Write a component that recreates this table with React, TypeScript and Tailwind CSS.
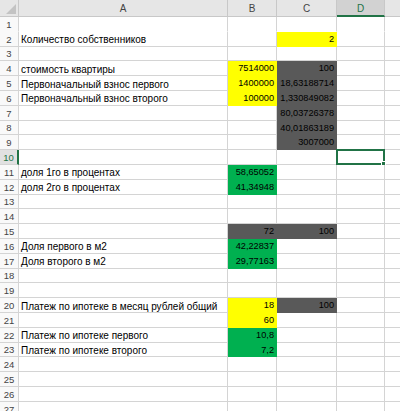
type Cell = { v: string; bg?: string };
type Row = { a?: string; b?: Cell; c?: Cell };

const Y = "bg-[#ffff00] border-[#ffff00]";
const G = "bg-[#00b050] border-[#00b050]";
const K = "bg-[#595959] border-[#595959]";

const rows: Row[] = [
  {},
  { a: "Количество собственников", c: { v: "2", bg: Y } },
  {},
  { a: "стоимость квартиры", b: { v: "7514000", bg: Y }, c: { v: "100", bg: K } },
  { a: "Первоначальный взнос первого", b: { v: "1400000", bg: Y }, c: { v: "18,63188714", bg: K } },
  { a: "Первоначальный взнос второго", b: { v: "100000", bg: Y }, c: { v: "1,330849082", bg: K } },
  { c: { v: "80,03726378", bg: K } },
  { c: { v: "40,01863189", bg: K } },
  { c: { v: "3007000", bg: K } },
  {},
  { a: "доля 1го в процентах", b: { v: "58,65052", bg: G } },
  { a: "доля 2го в процентах", b: { v: "41,34948", bg: G } },
  {},
  {},
  { b: { v: "72", bg: K }, c: { v: "100", bg: K } },
  { a: "Доля первого в м2", b: { v: "42,22837", bg: G } },
  { a: "Доля второго в м2", b: { v: "29,77163", bg: G } },
  {},
  {},
  { a: "Платеж по ипотеке в месяц рублей общий", b: { v: "18", bg: Y }, c: { v: "100", bg: K } },
  { b: { v: "60", bg: Y } },
  { a: "Платеж по ипотеке первого", b: { v: "10,8", bg: G } },
  { a: "Платеж по ипотеке второго", b: { v: "7,2", bg: G } },
  {},
  {},
  {},
  {},
];

const SEL_ROW = 10;

function Num({ cell, first }: { cell?: Cell; first?: boolean }) {
  const bg = cell?.bg ?? "bg-white border-[#d4d4d4]";
  return (
    <div
      className={`flex items-center justify-end pt-[2px] pr-[2px] text-[9.2px] whitespace-nowrap overflow-hidden border-r border-b ${bg} ${
        first ? "border-b-transparent" : ""
      }`}
    >
      {cell?.v}
    </div>
  );
}

export default function App() {
  return (
    <div
      className="w-[400px] h-[411px] overflow-hidden bg-white text-[10px] text-black"
      style={{ fontFamily: '"Liberation Sans", Arial, sans-serif' }}
    >
      <div className="grid grid-cols-[19px_209px_49px_60px_48px_15px] grid-rows-[17px_repeat(27,14.8px)]">
        {/* header row */}
        <div className="relative bg-[#e6e6e6] border-r border-b border-[#c8c8c8]">
          <div className="absolute right-[2px] bottom-[2px] w-0 h-0 border-l-[10px] border-l-transparent border-b-[10px] border-b-[#c3c3c3]" />
        </div>
        {["A", "B", "C"].map((h) => (
          <div
            key={h}
            className="flex items-center justify-center pt-[1px] bg-[#e6e6e6] border-r border-b border-[#c8c8c8] text-[#444]"
          >
            {h}
          </div>
        ))}
        <div className="flex items-center justify-center pt-[1px] bg-[#d2d2d2] border-r border-[#c8c8c8] border-b-2 border-b-[#217346] text-[#217346]">
          D
        </div>
        <div className="bg-[#e6e6e6] border-b border-[#c8c8c8]" />

        {rows.map((r, i) => {
          const n = i + 1;
          const first = n === 1;
          const sel = n === SEL_ROW;
          return [
            <div
              key={`h${n}`}
              className={`flex items-center justify-center pt-[2px] border-b text-[9.5px] ${
                first ? "border-b-transparent" : "border-b-[#d4d4d4]"
              } ${
                sel
                  ? "bg-[#e1e1e1] border-r-2 border-r-[#217346] text-[#217346]"
                  : "bg-[#f9f9f9] border-r border-r-[#d4d4d4] text-[#444]"
              }`}
            >
              {n}
            </div>,
            <div
              key={`a${n}`}
              className={`flex items-center pt-[2px] pl-[2px] whitespace-nowrap border-r border-b border-[#d4d4d4] ${
                first ? "border-b-transparent" : ""
              }`}
            >
              {r.a}
            </div>,
            <Num key={`b${n}`} cell={r.b} first={first} />,
            <Num key={`c${n}`} cell={r.c} first={first} />,
            <div
              key={`d${n}`}
              className={`relative border-r border-b border-[#d4d4d4] ${first ? "border-b-transparent" : ""}`}
            >
              {sel && (
                <div className="absolute -left-[1px] -top-[1px] w-[49px] h-[16px] border-2 border-[#217346]">
                  <div className="absolute -right-[3px] -bottom-[3px] w-[5px] h-[5px] bg-[#217346] border border-white" />
                </div>
              )}
            </div>,
            <div
              key={`e${n}`}
              className={`border-b border-[#d4d4d4] ${first ? "border-b-transparent" : ""}`}
            />,
          ];
        })}
      </div>
    </div>
  );
}
